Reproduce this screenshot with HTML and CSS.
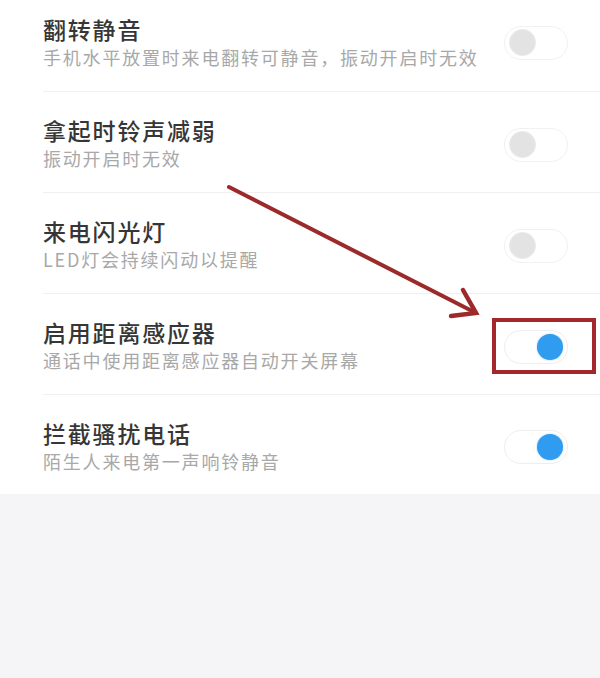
FILE: index.html
```html
<!DOCTYPE html>
<html lang="zh-CN">
<head>
<meta charset="utf-8">
<title>设置</title>
<link rel="stylesheet" href="styles.css">
</head>
<body>
<div class="page">
  <ul class="list">
    <li class="row">
      <div class="text">
        <div class="title">翻转静音</div>
        <div class="sub">手机水平放置时来电翻转可静音，振动开启时无效</div>
      </div>
      <span class="toggle off"><span class="knob"></span></span>
    </li>
    <li class="row">
      <div class="text">
        <div class="title">拿起时铃声减弱</div>
        <div class="sub">振动开启时无效</div>
      </div>
      <span class="toggle off"><span class="knob"></span></span>
    </li>
    <li class="row">
      <div class="text">
        <div class="title">来电闪光灯</div>
        <div class="sub">LED灯会持续闪动以提醒</div>
      </div>
      <span class="toggle off"><span class="knob"></span></span>
    </li>
    <li class="row highlight">
      <div class="text">
        <div class="title">启用距离感应器</div>
        <div class="sub">通话中使用距离感应器自动开关屏幕</div>
      </div>
      <span class="toggle on"><span class="knob"></span></span>
      <span class="mark-box"></span>
    </li>
    <li class="row">
      <div class="text">
        <div class="title">拦截骚扰电话</div>
        <div class="sub">陌生人来电第一声响铃静音</div>
      </div>
      <span class="toggle on"><span class="knob"></span></span>
    </li>
  </ul>
  <div class="footer"></div>
  <svg class="arrow" width="600" height="678" viewBox="0 0 600 678">
    <line x1="229" y1="187" x2="474" y2="312" stroke="#9c2a2b" stroke-width="4" stroke-linecap="round"/>
    <polyline points="451,316 476,313 463,290" fill="none" stroke="#9c2a2b" stroke-width="4.5" stroke-linecap="round" stroke-linejoin="miter"/>
  </svg>
</div>
</body>
</html>
```
FILE: styles.css
```css
html, body {
  margin: 0;
  padding: 0;
  background: #f5f4f7;
}

body {
  font-family: "Noto Sans CJK SC", "Noto Sans", sans-serif;
}

.page {
  position: relative;
  width: 600px;
  height: 678px;
  overflow: hidden;
  display: flex;
  flex-direction: column;
}

.list {
  list-style: none;
  margin: 0;
  padding: 0 0 0 43px;
  background: #ffffff;
}

.row {
  position: relative;
  display: flex;
  align-items: center;
  height: 101px;
  box-sizing: border-box;
  padding: 25px 32px 20px 0;
  border-bottom: 1px solid #f0f0f0;
}

.row:first-child {
  height: 92px;
  padding-top: 15px;
}

.row:last-child {
  border-bottom: none;
  height: 99px;
}

.text {
  flex: 1;
  display: flex;
  flex-direction: column;
}

.title {
  font-size: 23px;
  line-height: 28px;
  letter-spacing: 1.8px;
  color: #363636;
  font-weight: 500;
}

.sub {
  font-size: 18px;
  line-height: 29px;
  letter-spacing: 1.8px;
  color: #a8a8a8;
}

.toggle {
  position: relative;
  width: 64px;
  height: 34px;
  box-sizing: border-box;
  border: 1.5px solid #eeeeee;
  border-radius: 17px;
  background: #ffffff;
  flex: none;
}

.toggle .knob {
  position: absolute;
  top: 3px;
  width: 25px;
  height: 25px;
  border-radius: 50%;
}

.toggle.off {
  border-color: #f1f1f1;
}

.toggle.off .knob {
  left: 5px;
  background: #e3e3e3;
  box-shadow: 0 0 0 1px #ebebeb;
}

.toggle.on .knob {
  right: 4px;
  top: 3px;
  width: 26px;
  height: 26px;
  background: #2f9cf0;
  box-shadow: 0 0 2px rgba(47, 156, 240, 0.5);
}

.mark-box {
  position: absolute;
  left: 449px;
  top: 24px;
  width: 104px;
  height: 56px;
  box-sizing: border-box;
  border: 4.5px solid #a4282b;
}

.footer {
  flex: 1;
  background: #f5f4f7;
}

.arrow {
  position: absolute;
  left: 0;
  top: 0;
  pointer-events: none;
}
```
